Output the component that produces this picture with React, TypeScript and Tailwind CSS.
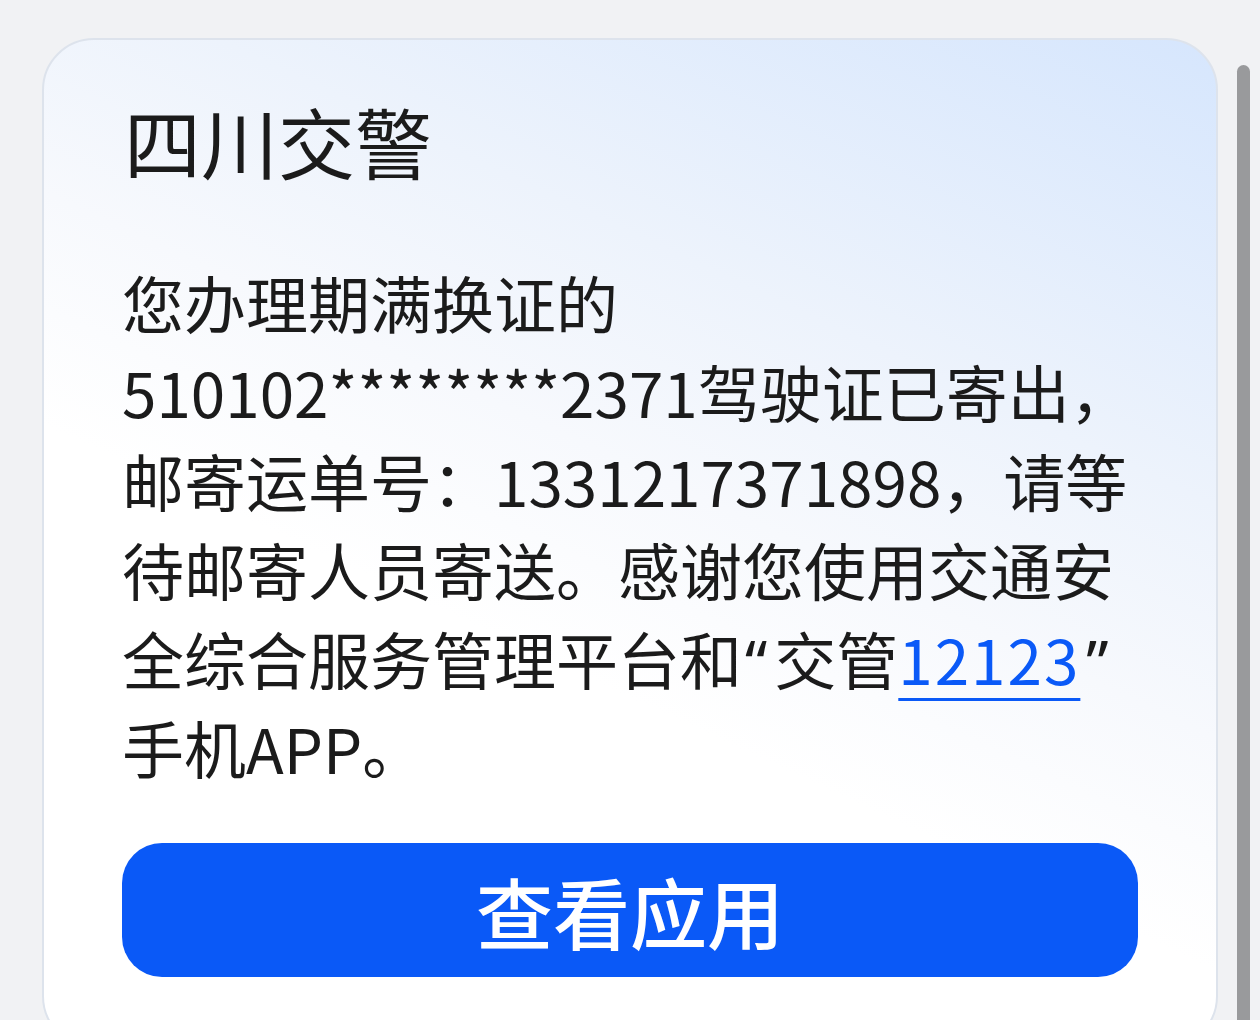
import { ReactNode } from 'react'

const FONT = "font-['Noto_Sans_CJK_SC','Noto_Sans',sans-serif]"

// Latin quote marks are narrower than the CJK full-width ones
function Quote({ children, className = '' }: { children: ReactNode; className?: string }) {
  return <span className={`font-['Noto_Sans','Noto_Sans_CJK_SC',sans-serif] leading-none ${className}`}>{children}</span>
}

function ServiceCard({ title, children, action }: { title: string; children: ReactNode; action: string }) {
  return (
    <div className="relative h-[1010px] w-[1176px] overflow-hidden rounded-[52px] border-2 border-[#dde3ec] bg-[linear-gradient(205deg,#d6e6fd_0%,#edf3fc_30%,#f7f9fd_45%,#ffffff_60%)] px-[78px] pt-[62px]">
      <h1 className="pl-[2px] text-[77px] leading-none font-normal text-[#1b1b1b]">{title}</h1>
      <p className="mt-[79px] text-[62px] leading-[89px] text-[#1b1b1b]">{children}</p>
      <button className="mt-[51px] flex h-[134px] w-full items-center justify-center rounded-[40px] bg-[#0a59f7] text-[77px] font-medium leading-none text-white">
        {action}
      </button>
    </div>
  )
}

export default function App() {
  return (
    <div className={`relative h-[1020px] overflow-hidden bg-[#f1f2f4] pt-[38px] pl-[42px] ${FONT}`}>
      <ServiceCard title="四川交警" action="查看应用">
        您办理期满换证的510102********2371驾驶证已寄出，邮寄运单号：1331217371898，请等待邮寄人员寄送。感谢您使用交通安全综合服务管理平台和
        <Quote className="ml-[3px] mr-[7px]">“</Quote>交管
        <a className="tracking-[2px] text-[#0a59f7] underline decoration-[3px] underline-offset-[13px]">12123</a>
        <Quote className="ml-[6px]">”</Quote>
        <wbr />
        手机APP。
      </ServiceCard>
      {/* overlay scrollbar */}
      <div className="absolute top-[65px] left-[1237px] h-[1000px] w-[13px] rounded-full bg-[#999a9c]" />
    </div>
  )
}
